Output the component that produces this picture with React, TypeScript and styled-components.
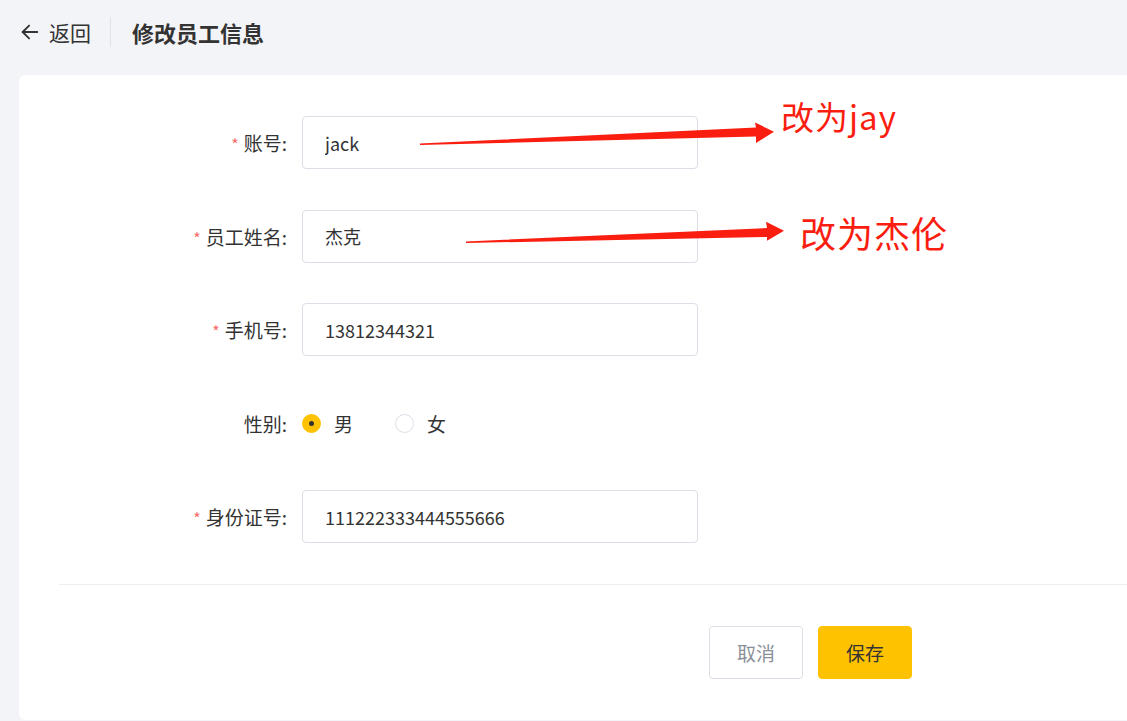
import React from "react";
import styled, { createGlobalStyle } from "styled-components";

const GlobalStyle = createGlobalStyle`
  html, body {
    margin: 0;
    padding: 0;
    background: #f3f4f7;
    font-family: "Noto Sans CJK SC", "Noto Sans", sans-serif;
    color: #333333;
  }
`;

interface Field {
  label: string;
  value: string;
  required: boolean;
}

const fields: Field[] = [
  { label: "账号", value: "jack", required: true },
  { label: "员工姓名", value: "杰克", required: true },
  { label: "手机号", value: "13812344321", required: true },
];

export default function App() {
  return (
    <Page>
      <GlobalStyle />
      <Header>
        <Back>
          <svg width="22" height="22" viewBox="0 0 24 24" fill="none" stroke="#333" strokeWidth="2" strokeLinecap="round" strokeLinejoin="round">
            <path d="M20 12H4" />
            <path d="m11 19-7-7 7-7" />
          </svg>
          返回
        </Back>
        <VLine />
        <Title>修改员工信息</Title>
      </Header>

      <Card>
        {fields.map((f) => (
          <Row key={f.label}>
            <Label>
              {f.required && <Star>*</Star>}
              {f.label}:
            </Label>
            <Input defaultValue={f.value} />
          </Row>
        ))}
        <Row>
          <Label>性别:</Label>
          <RadioGroup>
            <RadioItem>
              <Radio checked />
              男
            </RadioItem>
            <RadioItem>
              <Radio />
              女
            </RadioItem>
          </RadioGroup>
        </Row>
        <Row>
          <Label>
            <Star>*</Star>身份证号:
          </Label>
          <Input defaultValue="111222333444555666" />
        </Row>
        <HLine />
        <Footer>
          <Button>取消</Button>
          <Button primary>保存</Button>
        </Footer>
      </Card>

      {/* red annotations drawn on top of the screenshot */}
      <Overlay width="1127" height="721" viewBox="0 0 1127 721">
        <polygon points="420,143.5 756,127.5 755,122.5 774,131.7 756,143 756,136.5 420,145" fill="#fa1e10" />
        <polygon points="466,241.5 767,228 766,221.7 784,230.7 767,240.7 767,237 466,243" fill="#fa1e10" />
      </Overlay>
      <Note top={97} left={781} size={33}>改为jay</Note>
      <Note top={211} left={800} size={36}>改为杰伦</Note>
    </Page>
  );
}

const Page = styled.div`
  position: relative;
  min-height: 100vh;
  display: flex;
  flex-direction: column;
  overflow: hidden;
`;

const Header = styled.div`
  height: 75px;
  display: flex;
  align-items: center;
  padding: 0 0 12px 19px;
  box-sizing: border-box;
`;

const Back = styled.div`
  display: flex;
  align-items: center;
  gap: 8px;
  font-size: 21px;
  color: #333;
  cursor: pointer;
`;

const VLine = styled.div`
  width: 1px;
  height: 30px;
  background: #dfe2e8;
  margin: 0 21px 0 19px;
`;

const Title = styled.div`
  font-size: 22px;
  font-weight: bold;
  color: #333;
`;

const Card = styled.div`
  margin-left: 19px;
  background: #ffffff;
  border-radius: 6px 0 0 6px;
  padding: 41px 0 41px 40px;
  display: flex;
  flex-direction: column;
`;

const Row = styled.div`
  height: 53px;
  display: flex;
  align-items: center;
  margin-bottom: 40.5px;
`;

const Label = styled.label`
  width: 243px;
  box-sizing: border-box;
  padding-right: 15px;
  text-align: right;
  font-size: 19px;
  color: #333;
`;

const Star = styled.span`
  color: #f56c6c;
  font-size: 16px;
  margin-right: 5px;
`;

const Input = styled.input`
  width: 396px;
  height: 53px;
  box-sizing: border-box;
  border: 1px solid #dcdfe6;
  border-radius: 4px;
  padding: 0 22px;
  font-size: 18px;
  font-family: "Noto Sans CJK SC", "Noto Sans", sans-serif;
  color: #333;
  outline: none;
`;

const RadioGroup = styled.div`
  display: flex;
  align-items: center;
  gap: 42px;
`;

const RadioItem = styled.div`
  display: flex;
  align-items: center;
  gap: 13px;
  font-size: 19px;
  color: #333;
`;

const Radio = styled.span<{ checked?: boolean }>`
  width: 19px;
  height: 19px;
  box-sizing: border-box;
  border-radius: 50%;
  border: 1px solid ${(p) => (p.checked ? "#ffc200" : "#dcdfe6")};
  background: ${(p) => (p.checked ? "#ffc200" : "#ffffff")};
  display: flex;
  align-items: center;
  justify-content: center;
  &::after {
    content: "";
    width: 5px;
    height: 5px;
    border-radius: 50%;
    background: #333;
    display: ${(p) => (p.checked ? "block" : "none")};
  }
`;

const HLine = styled.div`
  height: 1px;
  background: #efefef;
`;

const Footer = styled.div`
  display: flex;
  gap: 15px;
  padding: 41px 0 0 650px;
`;

const Button = styled.button<{ primary?: boolean }>`
  width: 94px;
  height: 53px;
  border-radius: 4px;
  font-size: 19px;
  font-family: "Noto Sans CJK SC", "Noto Sans", sans-serif;
  border: 1px solid ${(p) => (p.primary ? "#ffc200" : "#dcdfe6")};
  background: ${(p) => (p.primary ? "#ffc200" : "#ffffff")};
  color: ${(p) => (p.primary ? "#333" : "#8a8f99")};
  cursor: pointer;
`;

const Overlay = styled.svg`
  position: absolute;
  left: 0;
  top: 0;
  pointer-events: none;
`;

const Note = styled.div<{ top: number; left: number; size: number }>`
  position: absolute;
  top: ${(p) => p.top}px;
  left: ${(p) => p.left}px;
  font-size: ${(p) => p.size}px;
  letter-spacing: 1px;
  line-height: 1.2;
  color: #fa1e10;
  pointer-events: none;
`;
